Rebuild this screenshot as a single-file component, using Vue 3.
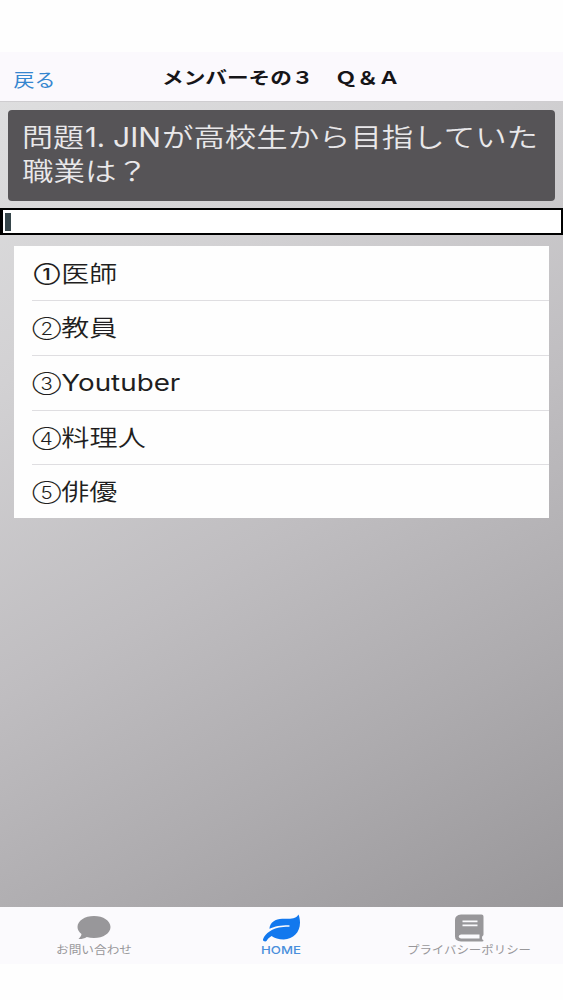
<script setup>
const title = [{ t: 'メンバーその３　Ｑ＆Ａ', x: 162, w: 238 }]
const question = [
  [
    { t: '問題', x: 14, w: 62 },
    { t: '1.', x: 77, w: 20, latin: true },
    { t: 'JIN', x: 105, w: 48, latin: true },
    { t: 'が高校生から目指していた', x: 154, w: 376 },
  ],
  [{ t: '職業は？', x: 14, w: 126 }],
]
const options = [
  { mark: '①', x: 20, y: 33, w: 26, first: true, t: '医師', tw: 56 },
  { mark: '②', x: 18.5, y: 34, w: 28.5, t: '教員', tw: 56 },
  { mark: '③', x: 18.5, y: 34, w: 28.5, t: 'Youtuber', tw: 119, latin: true },
  { mark: '④', x: 18.5, y: 34, w: 28.5, t: '料理人', tw: 84.5 },
  { mark: '⑤', x: 18.5, y: 34, w: 28.5, t: '俳優', tw: 56 },
]
</script>

<template>
  <div class="screen">
    <div class="status"></div>
    <header class="nav">
      <svg class="line" width="563" height="48">
        <text class="back" x="13.500" y="35" textLength="42" lengthAdjust="spacingAndGlyphs">戻る</text>
        <text v-for="s in title" :key="s.t" class="title" :x="s.x" y="32" :textLength="s.w" lengthAdjust="spacingAndGlyphs">{{ s.t }}</text>
      </svg>
    </header>

    <main class="content">
      <section class="question">
        <svg v-for="(row, i) in question" :key="i" class="line" width="547" height="34">
          <text v-for="s in row" :key="s.t" :class="{ latin: s.latin }" :x="s.x" y="30" :textLength="s.w" lengthAdjust="spacingAndGlyphs">{{ s.t }}</text>
        </svg>
      </section>

      <div class="field"><span class="caret"></span></div>

      <ul class="options">
        <li v-for="o in options" :key="o.mark">
          <svg class="line" width="536" height="53">
            <text class="mark" :class="{ first: o.first }" :x="o.x" :y="o.y - 0.5" :textLength="o.w" lengthAdjust="spacingAndGlyphs">{{ o.mark }}</text>
            <text :class="{ latin: o.latin }" x="47.300" y="35.300" :textLength="o.tw" lengthAdjust="spacingAndGlyphs">{{ o.t }}</text>
          </svg>
        </li>
      </ul>
    </main>

    <footer class="tabs">
      <div class="tab">
        <svg class="line" width="187" height="57">
          <path d="M94 9c9.300 0 16.500 4.800 16.500 11s-7.200 11-16.500 11c-2.600 0-5-.3-7.200-1-2.600 1.500-5.400 2.200-8.300 2 1.700-1.500 2.900-3.300 3-5-2.500-1.900-4-4.300-4-7 0-6.200 7.200-11 16.500-11z" />
          <text x="56" y="46.500" textLength="76" lengthAdjust="spacingAndGlyphs">お問い合わせ</text>
        </svg>
      </div>
      <div class="tab active">
        <svg class="line" width="188" height="57">
          <path transform="translate(-9.500 -0.300) scale(1.085 1.040)" d="M111.500 7.500c.9 2.300 1.400 5 1.400 8 0 9-6.200 16-15 16-4.800 0-8.400-1.300-11.200-3.400-2.300 1.500-3.600 2.800-4.500 4.700-.7 1.200-3.800.6-3.400-1.300 1-3.500 4.200-7 8.200-9.200 4-2.200 8.500-3 15.500-3.100 1.300 0 1.300-1.400 0-1.400-7.700 0-12.700 1-17.800 3.500.5-6 5.500-9.600 11.800-9.600h5.500c5 0 8-1.200 9.500-4.200z" />
          <text x="74" y="46.500" textLength="40" lengthAdjust="spacingAndGlyphs">HOME</text>
        </svg>
      </div>
      <div class="tab">
        <svg class="line" width="188" height="57">
          <path fill-rule="evenodd" d="M86 7.500h20.500q2 0 2 2v18q0 1-1.200 1.700-.7 2 0 3.300 1.200.3 1.200 1.200 0 .8-1.500.8H86q-6-.4-6-5V13q0-5 6-5.500zM87.500 13.500v1.700h15v-1.700zM87.500 17.500v1.700h15v-1.700zM86 27.500q-2.300.3-2.300 2t2.300 2h18.500v-4z" />
          <text x="32" y="46.500" textLength="124" lengthAdjust="spacingAndGlyphs">プライバシーポリシー</text>
        </svg>
      </div>
    </footer>
  </div>
</template>

<style>
body {
  margin: 0;
  background: #fefefe;
}
</style>

<style scoped>
.screen {
  width: 563px;
  height: 1000px;
  display: flex;
  flex-direction: column;
  background: #fefefe;
  font-family: "Noto Sans CJK JP", sans-serif;
}
.line {
  display: block;
  overflow: visible;
}
.status {
  height: 52px;
}
.nav {
  height: 50px;
  background: #fbf9fd;
  border-bottom: 1px solid #cfcdd0;
  box-sizing: border-box;
}
.back {
  font-size: 18px;
  fill: #3586cf;
}
.title {
  font-size: 17.5px;
  font-weight: 700;
  fill: #161518;
}
.content {
  height: 805px;
  box-sizing: border-box;
  padding-top: 7.500px;
  background: linear-gradient(150deg, #dededf 0%, #d2d1d3 25%, #bfbdc0 53%, #adabae 76%, #99979a 100%);
}
.question {
  height: 91.500px;
  margin: 0 8px;
  padding-top: 7px;
  box-sizing: border-box;
  border-radius: 4px;
  background: #565457;
  font-size: 26px;
  font-weight: 350;
  fill: #e9e8ea;
}
.question .latin {
  font-family: Inter, sans-serif;
  font-size: 27px;
  font-weight: 400;
}
.field {
  height: 27px;
  margin-top: 6.500px;
  padding: 3px 2px;
  box-sizing: border-box;
  border: solid #000;
  border-width: 2px 2px 2px 3px;
  background: #fff;
}
.caret {
  display: block;
  width: 6px;
  height: 18px;
  background: #36454a;
}
.options {
  list-style: none;
  margin: 11.500px 14px 0;
  padding: 0.500px 0 0;
  box-sizing: border-box;
  height: 272px;
  background: #fefefe;
  font-size: 23px;
  font-weight: 350;
  fill: #1f1e21;
}
.options li {
  height: 54.700px;
  display: flex;
  flex-direction: column;
  justify-content: space-between;
}
.options li:not(:last-child)::after {
  content: "";
  height: 1px;
  margin-left: 18px;
  background: #dfdee1;
}
.options .latin {
  font-family: Inter, sans-serif;
  font-weight: 400;
}
.options .mark {
  font-family: Inter, sans-serif;
  font-size: 17px;
  font-weight: 300;
}
.options .first {
  font-size: 15.500px;
  font-weight: 600;
}
.tabs {
  height: 57px;
  display: flex;
  background: #fbfafd;
  fill: #98979a;
  font-size: 11px;
}
.tab:first-child {
  width: 187px;
}
.tab {
  width: 188px;
}
.active {
  fill: #1278ee;
}
.active text {
  font-family: Inter, sans-serif;
  font-weight: 500;
  fill: #4a8fdc;
}
</style>
